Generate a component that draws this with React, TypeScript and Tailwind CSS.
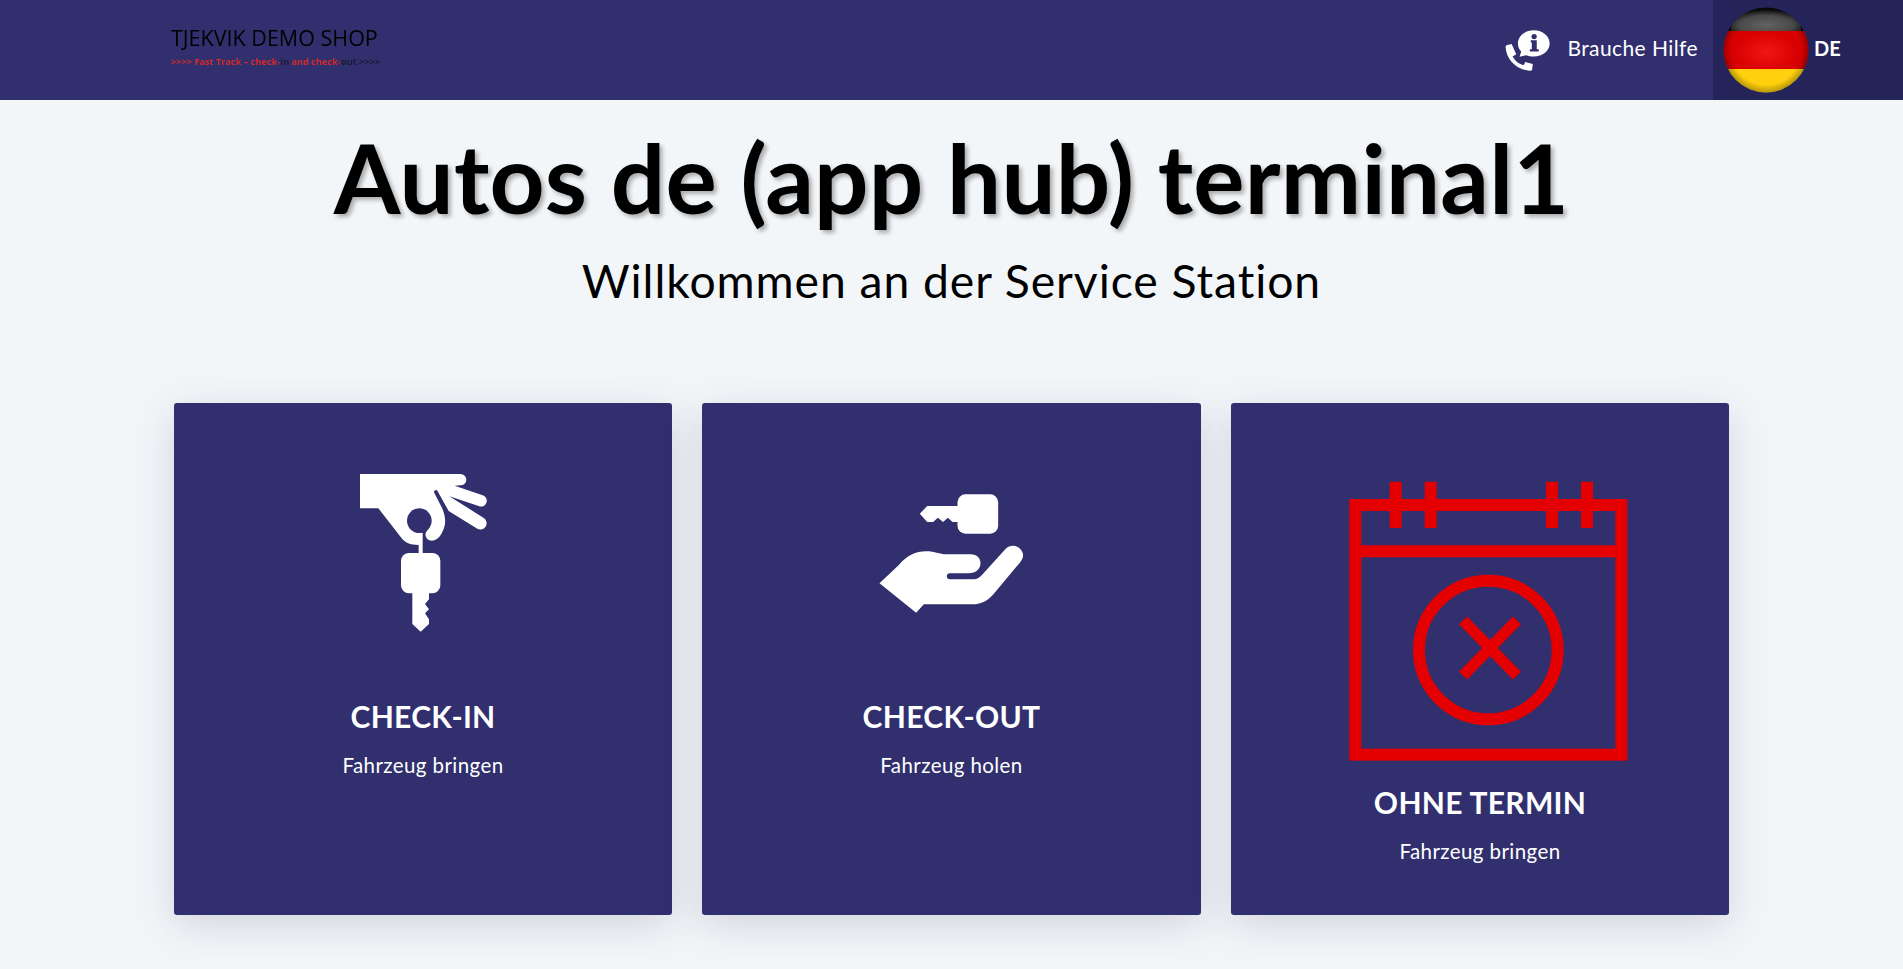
const FONT = "font-['Lato',sans-serif]";

const HandOverKey = () => (
   <svg viewBox="-6 0 570 570" className="w-[190px] h-[190px] mb-[59px] shrink-0">
      <path
         fill="#fff"
         d="M90 72 H392 A17 17 0 0 1 392 106 L374 107 L458 136 A16 16 0 0 1 448 169 L358 139 L460 203 A17 17 0 0 1 442 236 L356 183 L322 122 A6 6 0 0 0 312 127 L335 172 C350 205 348 225 335 250 C325 270 305 278 293 268 C283 258 285 248 295 238 L278 240 V312 H266 V285 C240 285 225 278 215 265 L145 175 H90 Z"
      />
      <circle cx="268" cy="212" r="37" fill="#312f6e" />
      <rect x="213" y="309" width="118" height="121" rx="24" fill="#fff" />
      <path fill="#fff" d="M247 428 V522 L272 545 L297 522 V508 L285 490 L297 478 L285 462 L297 448 V428 Z" />
   </svg>
);

const HandTakeKey = () => (
   <svg viewBox="-10.5 0 570 480" className="w-[190px] h-[160px] mt-5 mb-[69px] shrink-0">
      <rect x="291" y="73" width="122" height="118" rx="24" fill="#fff" />
      <path fill="#fff" d="M295 108 H200 L178 131 L200 156 H218 L232 143 L248 156 L262 143 L276 156 H295 Z" />
      <path
         fill="#fff"
         d="M57 340 L115 285 C145 250 175 240 215 245 L250 253 H330 C350 253 360 265 360 280 C360 298 345 310 325 310 H268 A9 9 0 0 0 268 328 H340 C350 328 358 322 365 314 L435 237 C450 222 475 225 485 245 C492 258 485 270 478 278 L405 365 C385 390 365 403 335 403 H190 L167 428 Z"
      />
   </svg>
);

const CalendarCross = () => (
   <svg viewBox="-15 0 930 930" className="w-[310px] h-[310px] mt-[10px] mb-[15px] shrink-0" fill="none" stroke="#e40000" strokeWidth="36">
      <rect x="76" y="135" width="798" height="749" />
      <path d="M76 274 H874" />
      <path d="M197 65 V204 M302 65 V204 M666 65 V204 M771 65 V204" />
      <circle cx="475" cy="570" r="208" />
      <path strokeWidth="34" d="M399 481 L561 647 M561 481 L399 647" />
   </svg>
);

const HelpIcon = () => (
   <svg viewBox="78 84 142 130" className="w-[47px] h-[43px]">
      <path fill="#fff" d="M168 88 C195 88 216 106 216 128 C216 150 195 167 168 167 C160 167 150 165 145 163 L125 168 L130 152 C123 145 120 137 120 128 C120 106 141 88 168 88 Z" />
      <path fill="#312f6e" d="M159 118 H177 V145 H183 V152 H156 V145 H162 V125 H159 Z" />
      <circle cx="169" cy="107" r="8" fill="#312f6e" />
      <path fill="#fff" d="M83 140 C82 135 85 133 88 132 L101 129 L115 160 L104 167 C111 180 124 191 138 193 L142 184 L165 190 L163 207 C162 210 158 210 155 210 C115 208 85 175 83 140 Z" />
   </svg>
);

const GermanFlag = () => (
   <svg viewBox="0 0 86 86" className="w-[86px] h-[86px]">
      <defs>
         <clipPath id="ball"><circle cx="43" cy="43" r="42.5" /></clipPath>
         <radialGradient id="shade" cx="50%" cy="50%" r="50%">
            <stop offset="0.82" stopColor="#000" stopOpacity="0" />
            <stop offset="1" stopColor="#000" stopOpacity="0.28" />
         </radialGradient>
         <radialGradient id="glow" cx="50%" cy="50%" r="50%">
            <stop offset="0" stopColor="#ff2424" stopOpacity="0.6" />
            <stop offset="1" stopColor="#ff2424" stopOpacity="0" />
         </radialGradient>
         <radialGradient id="gloss" cx="50%" cy="75%" r="65%">
            <stop offset="0" stopColor="#fff" stopOpacity="0.36" />
            <stop offset="0.6" stopColor="#fff" stopOpacity="0.26" />
            <stop offset="1" stopColor="#fff" stopOpacity="0" />
         </radialGradient>
      </defs>
      <g clipPath="url(#ball)">
         <rect width="86" height="25" fill="#0a0a0a" />
         <rect y="24" width="86" height="38" fill="#d80000" />
         <rect y="62" width="86" height="24" fill="#ffd00d" />
         <ellipse cx="43" cy="45" rx="32" ry="20" fill="url(#glow)" />
         <circle cx="43" cy="43" r="42.5" fill="url(#shade)" />
         <rect x="8" y="0" width="70" height="24" fill="url(#gloss)" />
      </g>
   </svg>
);

const ServiceCard = ({ icon, title, text }: { icon: React.ReactNode, title: string, text: string }) => (
   <div className="w-[498.5px] h-[512px] bg-[#312f6e] rounded-[3px] shadow-[0_10px_40px_rgba(40,50,70,0.17)] flex flex-col items-center pt-[47px] text-white">
      {icon}
      <h3 className="text-[30px] leading-[34px] font-bold tracking-[0.01em]">{title}</h3>
      <p className="text-[20.5px] leading-6 mt-[20px] tracking-[0.02em]">{text}</p>
   </div>
);

const App = () => {
   return (
      <div className={`${FONT} w-full h-[969px] overflow-hidden bg-[#f3f6f9]`}>
         <header className="h-[100px] bg-[#312f6e] flex items-center justify-between pl-[171px]">
            <div className="w-[210px] -mt-[7px] blur-[0.4px]">
               <div className="text-[21.5px] leading-6 font-medium text-black whitespace-nowrap font-['Open_Sans',sans-serif]">TJEKVIK DEMO SHOP</div>
               <div className="text-[9.2px] leading-3 font-bold text-[#d42a2a] whitespace-nowrap mt-[6px] font-['Open_Sans',sans-serif]">
                  {'>>>> Fast Track – check-'}<span className="text-[#1a1a33]">in</span>{' and check-'}<span className="text-[#1a1a33]">{'out >>>>'}</span>
               </div>
            </div>
            <div className="flex items-center h-full">
               <HelpIcon />
               <span className="text-[21px] text-white ml-4 mr-[15px] tracking-[0.02em] -mt-1">Brauche Hilfe</span>
               <div className="w-[190px] h-full bg-[#25245a] flex items-center pl-[10px]">
                  <GermanFlag />
                  <span className="text-[20px] font-bold text-white ml-[5px] -mt-1">DE</span>
               </div>
            </div>
         </header>
         <main className="flex flex-col items-center">
            <h1 className="text-[96px] leading-[130px] font-bold text-black mt-3 whitespace-nowrap tracking-[0.2px] [text-shadow:3px_3px_4px_rgba(0,0,0,0.3)]">
               Autos de (app hub) terminal1
            </h1>
            <h2 className="text-[46.3px] leading-[62px] text-black mt-[7px] tracking-[0.02em]">Willkommen an der Service Station</h2>
            <div className="flex gap-[30px] mt-[92px]">
               <ServiceCard icon={<HandOverKey />} title="CHECK-IN" text="Fahrzeug bringen" />
               <ServiceCard icon={<HandTakeKey />} title="CHECK-OUT" text="Fahrzeug holen" />
               <ServiceCard icon={<CalendarCross />} title="OHNE TERMIN" text="Fahrzeug bringen" />
            </div>
         </main>
      </div>
   );
};

export default App;
